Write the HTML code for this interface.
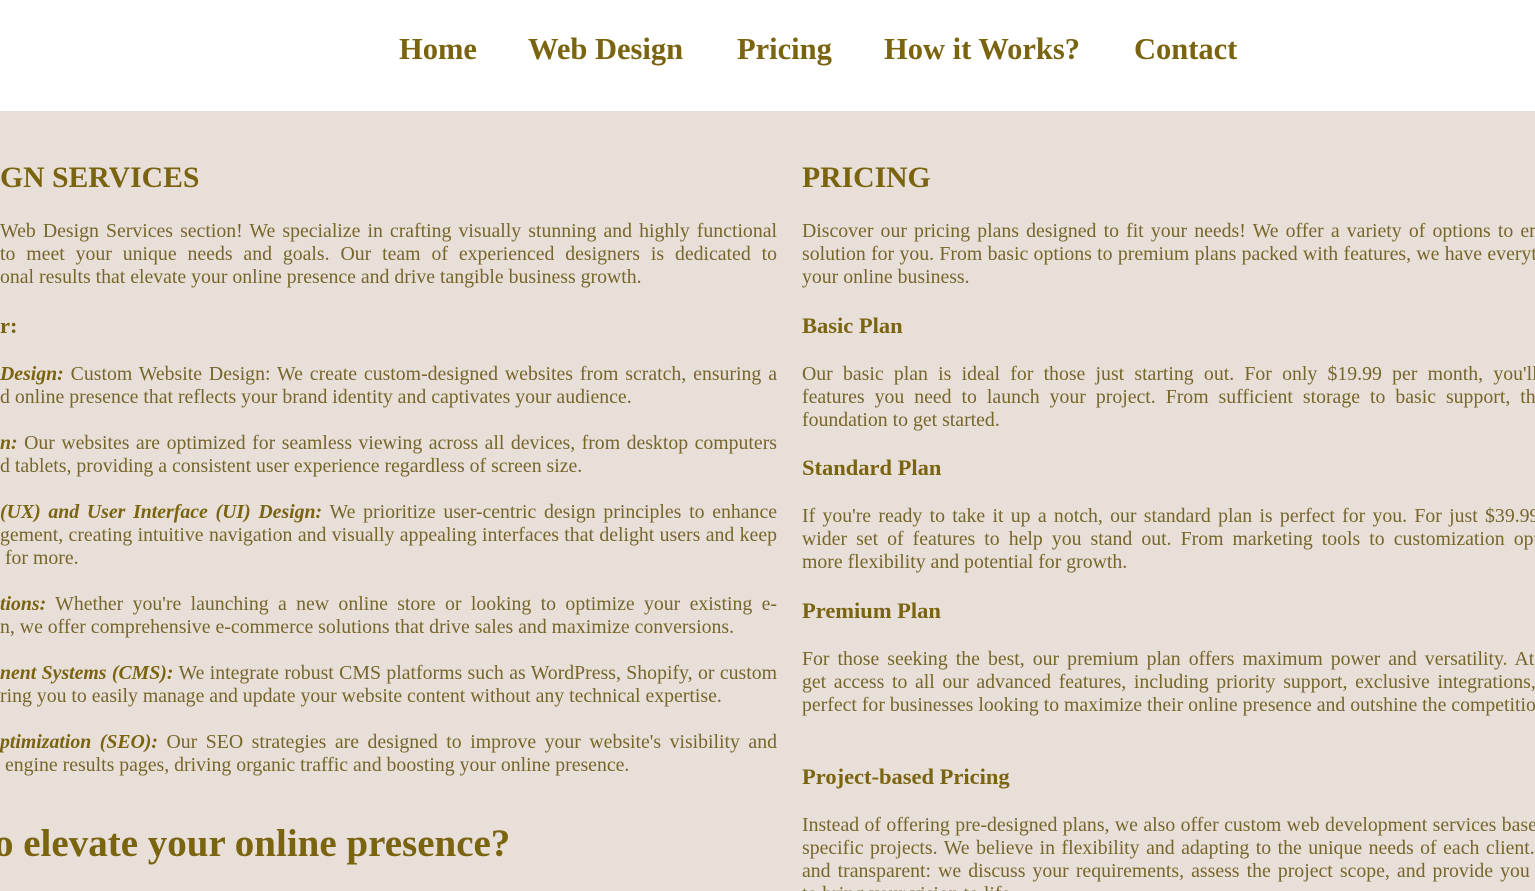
<!DOCTYPE html>
<html><head><meta charset="utf-8"><style>
html,body{margin:0;width:1535px;height:891px;overflow:hidden}
body{background:#e8dfd9;font-family:"Liberation Serif",serif;color:#76662a;position:relative}
.nav{position:absolute;left:0;top:0;width:1535px;height:111px;background:#fff}
.nav a{position:absolute;top:30px;font-size:30.5px;font-weight:bold;color:#7a6410;text-decoration:none;line-height:38px}
.l,.r{position:absolute;height:23px;line-height:23px;font-size:19.8px;white-space:nowrap;overflow:hidden}
.l{left:0;width:777px}
.r{left:802px;width:770px}
.j{text-align:justify;text-align-last:justify;white-space:normal}
.h{position:absolute;font-weight:bold;color:#7a6410;white-space:nowrap}
.s{font-size:22.5px;line-height:26px}
b i,i b{color:#7a6410}
</style></head><body>
<div class="nav">
<a style="left:399px">Home</a><a style="left:528px">Web Design</a><a style="left:737px">Pricing</a><a style="left:884px">How it Works?</a><a style="left:1134px">Contact</a>
</div>
<div class="h" style="left:0;top:161px;font-size:29.7px;line-height:34px">GN SERVICES</div>
<div class="h" style="left:802px;top:161px;font-size:29.7px;line-height:34px">PRICING</div>

<div class="l j" style="top:220px">Web Design Services section! We specialize in crafting visually stunning and highly functional</div>
<div class="l j" style="top:243px">to meet your unique needs and goals. Our team of experienced designers is dedicated to</div>
<div class="l" style="top:266px">onal results that elevate your online presence and drive tangible business growth.</div>
<div class="h s" style="left:0;top:313px">r:</div>
<div class="l j" style="top:363px"><b><i>Design:</i></b> Custom Website Design: We create custom-designed websites from scratch, ensuring a</div>
<div class="l" style="top:386px">d online presence that reflects your brand identity and captivates your audience.</div>
<div class="l j" style="top:432px"><b><i>n:</i></b> Our websites are optimized for seamless viewing across all devices, from desktop computers</div>
<div class="l" style="top:455px">d tablets, providing a consistent user experience regardless of screen size.</div>
<div class="l j" style="top:501px"><b><i>(UX) and User Interface (UI) Design:</i></b> We prioritize user-centric design principles to enhance</div>
<div class="l j" style="top:524px">gement, creating intuitive navigation and visually appealing interfaces that delight users and keep</div>
<div class="l" style="top:547px">&nbsp;for more.</div>
<div class="l j" style="top:593px"><b><i>tions:</i></b> Whether you're launching a new online store or looking to optimize your existing e-</div>
<div class="l" style="top:616px">n, we offer comprehensive e-commerce solutions that drive sales and maximize conversions.</div>
<div class="l j" style="top:662px"><b><i>nent Systems (CMS):</i></b> We integrate robust CMS platforms such as WordPress, Shopify, or custom</div>
<div class="l" style="top:685px">ring you to easily manage and update your website content without any technical expertise.</div>
<div class="l j" style="top:731px"><b><i>ptimization (SEO):</i></b> Our SEO strategies are designed to improve your website's visibility and</div>
<div class="l" style="top:754px">&nbsp;engine results pages, driving organic traffic and boosting your online presence.</div>
<div class="h" style="left:-6px;top:822px;font-size:39px;line-height:44px">o elevate your online presence?</div>

<div class="r j" style="top:220px">Discover our pricing plans designed to fit your needs! We offer a variety of options to ensure</div>
<div class="r j" style="top:243px">solution for you. From basic options to premium plans packed with features, we have everything</div>
<div class="r" style="top:266px">your online business.</div>
<div class="h s" style="left:802px;top:313px">Basic Plan</div>
<div class="r j" style="top:363px">Our basic plan is ideal for those just starting out. For only $19.99 per month, you'll get</div>
<div class="r j" style="top:386px">features you need to launch your project. From sufficient storage to basic support, this is</div>
<div class="r" style="top:409px">foundation to get started.</div>
<div class="h s" style="left:802px;top:455px">Standard Plan</div>
<div class="r j" style="top:505px">If you're ready to take it up a notch, our standard plan is perfect for you. For just $39.99 per</div>
<div class="r j" style="top:528px">wider set of features to help you stand out. From marketing tools to customization options</div>
<div class="r" style="top:551px">more flexibility and potential for growth.</div>
<div class="h s" style="left:802px;top:598px">Premium Plan</div>
<div class="r j" style="top:648px">For those seeking the best, our premium plan offers maximum power and versatility. At $59</div>
<div class="r j" style="top:671px">get access to all our advanced features, including priority support, exclusive integrations, and</div>
<div class="r" style="top:694px">perfect for businesses looking to maximize their online presence and outshine the competition.</div>
<div class="h s" style="left:802px;top:764px">Project-based Pricing</div>
<div class="r j" style="top:814px">Instead of offering pre-designed plans, we also offer custom web development services based on</div>
<div class="r j" style="top:837px">specific projects. We believe in flexibility and adapting to the unique needs of each client. Our</div>
<div class="r j" style="top:860px">and transparent: we discuss your requirements, assess the project scope, and provide you with</div>
<div class="r" style="top:883px">to bring your vision to life.</div>
</body></html>
